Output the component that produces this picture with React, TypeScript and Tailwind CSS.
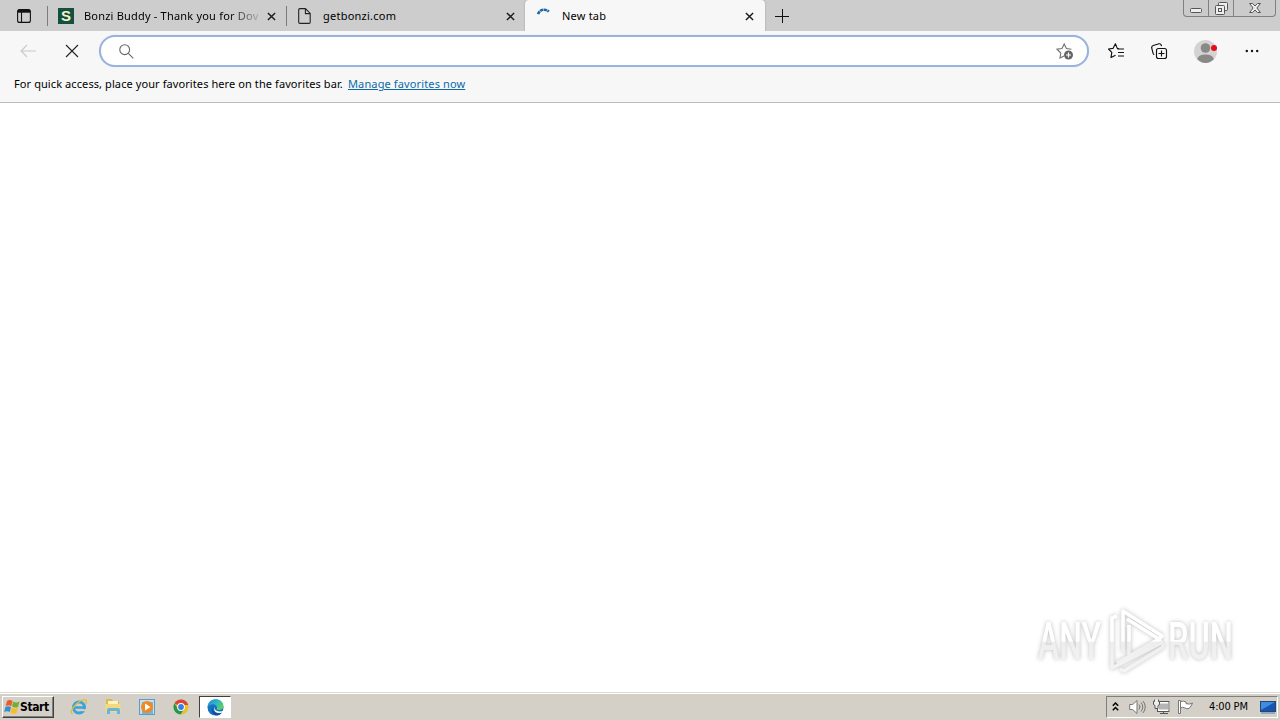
import React from 'react';

interface IconProps {
  className?: string;
}

const CloseIcon: React.FC<IconProps> = ({ className }) => (
  <svg className={className} viewBox="0 0 10 10" fill="none" stroke="#1b1b1b" strokeWidth="1.6">
    <path d="M1 1l8 8M9 1L1 9" />
  </svg>
);

const TabStrip = () => (
  <div className="flex h-[31px] bg-[#cdcdcd] font-['Noto_Sans',sans-serif] text-[11px] text-black">
    <div className="flex w-[47px] items-center pl-[17px]">
      <svg className="h-[14px] w-[14px]" viewBox="0 0 14 14" fill="none" stroke="#111" strokeWidth="1.1">
        <rect x=".6" y=".6" width="12.8" height="12.8" rx="2" />
        <path d="M1 2.2h12" strokeWidth="3" />
        <path d="M4.5 3v10" />
      </svg>
    </div>

    <div className="mt-[6px] h-[20px] w-px bg-[#7c7c7c]" />
    <div className="flex w-[238px] items-center pl-[10px]">
      <div className="flex h-4 w-4 items-center justify-center bg-[#14503f] font-['Liberation_Sans',sans-serif] text-[15px] leading-none font-bold text-[#f6f3c8]">
        S
      </div>
      <div className="mt-px ml-[10px] w-[175px] overflow-hidden whitespace-nowrap [mask-image:linear-gradient(to_right,black_145px,transparent_180px)]">
        <span className="tracking-[0.2px]">Bonzi Buddy - Thank you for Dov</span>
      </div>
      <CloseIcon className="mt-px ml-[8px] h-[9px] w-[9px]" />
    </div>

    <div className="mt-[6px] h-[20px] w-px bg-[#7c7c7c]" />
    <div className="flex w-[238px] items-center pl-[11px]">
      <svg className="h-[16px] w-[13px]" viewBox="0 0 13 16" fill="none" stroke="#222" strokeWidth="1.1">
        <path d="M.7 2Q.7.6 2 .6h5.4l4.8 4.8v8.8q0 1.2-1.2 1.2H2q-1.3 0-1.3-1.2zM7.4.8v4.8H12" />
      </svg>
      <span className="mt-px ml-[12px] w-[183px] tracking-[0.24px]">getbonzi.com</span>
      <CloseIcon className="mt-px h-[9px] w-[9px]" />
    </div>

    <div className="flex w-[240px] items-center rounded-t-[4px] bg-[#f7f7f7] pl-[11px] shadow-[0_0_2px_#999]">
      <svg className="h-[16px] w-[16px]" viewBox="0 0 16 16" fill="none" stroke="#1f67a8" strokeWidth="2.6">
        <path d="M2 6.2A6.5 6.5 0 0 1 12.8 3.600" strokeDasharray="3.300 .5" />
      </svg>
      <span className="mt-px ml-[10px] w-[183px] tracking-[0.2px]">New tab</span>
      <CloseIcon className="mt-px h-[9px] w-[9px]" />
    </div>

    <div className="flex items-center pl-[10px]">
      <svg className="h-[14px] w-[14px]" viewBox="0 0 14 14" stroke="#111">
        <path d="M0 7.5h14M7.5 0v14" />
      </svg>
    </div>

    <div className="mr-[4px] ml-auto flex h-[17px] w-[93px] rounded-b-[4px] border border-t-0 border-[#808080] bg-[#cbcbcb]">
      <div className="flex w-[25px] items-center justify-center border-r border-[#808080]">
        <svg className="mt-[4px] h-[5px] w-[12px]" viewBox="0 0 12 5" fill="#eee" stroke="#555">
          <rect x=".5" y=".5" width="11" height="4" rx="1" />
        </svg>
      </div>
      <div className="flex w-[25px] items-center justify-center border-r border-[#808080]">
        <svg className="h-[13px] w-[13px]" viewBox="0 0 13 13" fill="#eee" stroke="#555">
          <rect x="3.5" y=".5" width="9" height="8" rx="1" />
          <rect x=".5" y="3.5" width="9" height="9" rx="1" />
          <rect x="3.5" y="6.5" width="3" height="3" />
        </svg>
      </div>
      <div className="flex flex-1 items-center justify-center">
        <svg className="h-[10px] w-[12px]" viewBox="0 0 12 10" fill="#eee" stroke="#555" strokeLinejoin="round">
          <path d="M.6.5h3L6 3 8.4.5h3L7.9 5l3.5 4.5h-3L6 7 3.6 9.5h-3L4.1 5z" />
        </svg>
      </div>
    </div>
  </div>
);

const Toolbar = () => (
  <div className="flex h-[40px] items-center bg-[#f7f7f7] pl-[20px]">
    <svg className="h-[14px] w-[16px]" viewBox="0 0 16 14" fill="none" stroke="#c9c9c9" strokeWidth="1.1">
      <path d="M16 7H1M7 1L1 7l6 6" />
    </svg>
    <svg className="ml-[29px] h-[14px] w-[14px]" viewBox="0 0 14 14" stroke="#222" strokeWidth="1.1">
      <path d="M1 1l12 12M13 1L1 13" />
    </svg>
    <div className="ml-[20px] flex h-[32px] w-[990px] items-center rounded-full border-2 border-[#9ab3dc] bg-white pr-[13px] pl-[18px] shadow-[0_0_1px_#bcd6f5]">
      <svg className="h-[15px] w-[15px]" viewBox="0 0 15 15" fill="none" stroke="#666" strokeWidth="1.1">
        <circle cx="5.7" cy="5.7" r="4.9" />
        <path d="M9.3 9.3l5 5" />
      </svg>
      <svg className="ml-auto h-[18px] w-[18px]" viewBox="0 0 18 18" fill="none" stroke="#707070">
        <path d="M8 14l-4 2 .8-5L1 7.2l5-.7L8.2 2l2.2 4.5 5 .7" strokeWidth="1.1" />
        <circle cx="12.5" cy="13" r="4.5" fill="#666" stroke="none" />
        <path d="M12.5 10.5v5M10 13h5" stroke="#fff" strokeWidth="1.2" />
      </svg>
    </div>
    <svg className="ml-[19px] h-[16px] w-[17px]" viewBox="0 0 17 16" fill="none" stroke="#111" strokeWidth="1.15">
      <path d="M11 5.8L9.3 5.4 7.4.8 5 5.4.5 6l3.3 3.4L3 14.6l4.5-2.3" strokeLinejoin="round" />
      <path d="M9.5 6h6.5M10 9.5h6M10 13h6" />
    </svg>
    <svg className="ml-[26px] h-[17px] w-[17px]" viewBox="0 0 17 17" fill="none" stroke="#111" strokeWidth="1.15">
      <path d="M3.2 11.7Q2.2 11.2 2 10L.7 5Q.4 3.2 2.2 2.5L8 .8q1.700-.4 2.200 1.200l.3 1.200" />
      <rect x="5.5" y="5.500" width="10" height="10" rx="2" />
      <path d="M10.500 7.500v6M7.500 10.500h6" />
    </svg>
    <div className="relative ml-[26px] h-[23px] w-[23px]">
      <svg className="h-[23px] w-[23px]" viewBox="0 0 23 23" fill="#8b8987">
        <circle cx="11.5" cy="11.5" r="11.5" fill="#d5d3d1" />
        <circle cx="11.5" cy="8" r="4.8" />
        <path d="M3.2 19.3Q4 14.5 11.5 14.5t8.3 4.8Q16 23 11.5 23t-8.300-3.700z" />
      </svg>
      <div className="absolute top-[5px] left-[17px] h-[6px] w-[6px] rounded-full bg-[#e50b17]" />
    </div>
    <svg className="ml-[28px] h-[4px] w-[14px]" viewBox="0 0 14 4" fill="#111">
      <circle cx="1.8" cy="2" r="1.2" />
      <circle cx="7" cy="2" r="1.2" />
      <circle cx="12.2" cy="2" r="1.2" />
    </svg>
  </div>
);

const FavoritesBar = () => (
  <div className="flex h-[32px] items-center border-b border-[#bcbcbc] bg-[#f7f7f7] pb-[4px] pl-[14px] font-['Noto_Sans',sans-serif] text-[11px] whitespace-nowrap">
    <span className="w-[334px] tracking-[0.09px] text-black">
      For quick access, place your favorites here on the favorites bar.
    </span>
    <a className="tracking-[0.13px] text-[#0b6ba8] underline underline-offset-1">Manage favorites now</a>
  </div>
);

const Watermark = () => (
  <svg
    className="absolute right-[28px] bottom-[14px] h-[74px] w-[220px] drop-shadow-[0_0_2px_rgba(0,0,0,0.26)]"
    viewBox="0 0 220 74"
  >
    <defs>
      <linearGradient id="fade" x1="0" y1="0" x2="0" y2="74" gradientUnits="userSpaceOnUse">
        <stop offset=".5" stopColor="#fff" />
        <stop offset=".52" stopColor="#eee" />
        <stop offset="1" stopColor="#f5f5f5" />
      </linearGradient>
    </defs>
    <g fill="url(#fade)" fontFamily="Roboto, sans-serif" fontSize="51" fontWeight="500">
      <text x="6" y="55" textLength="63" lengthAdjust="spacingAndGlyphs">ANY</text>
      <text x="136" y="55" textLength="65" lengthAdjust="spacingAndGlyphs">RUN</text>
    </g>
    <g fill="none" stroke="url(#fade)" strokeWidth="3.6" strokeLinejoin="round">
      <path d="M91 48V7l39 25-3 3-32-20" />
      <path d="M85 12l-5 2v50l51-26" />
      <path d="M97 21v31l28-16M85 59l44-24M88 65l4 2 39-24v-4" />
    </g>
  </svg>
);

const Taskbar = () => (
  <div className="flex h-[28px] items-center border-t border-[#dedbd5] bg-[#d4d0c8] pl-[2px] shadow-[inset_0_1px_#fff]">
    <div className="mt-px flex h-[22px] w-[52px] items-center border border-t-white border-r-[#404040] border-b-[#404040] border-l-white pl-px shadow-[inset_-1px_-1px_#808080]">
      <svg className="h-[16px] w-[16px] shrink-0" viewBox="0 0 16 16">
        <path d="M3 2q2.500-2 5.500 0L7.300 7Q4.500 5.500 1.700 7z" fill="#ed5b28" />
        <path d="M9.200 2.500q3 2 6.300 0L14 8Q10.500 9.500 8 7.300z" fill="#72ae32" />
        <path d="M1.400 8q2.800-1.500 5.600 0l-1.200 5q-2.800-1.500-5.600 0z" fill="#358ed1" />
        <path d="M7.800 8.500q2.900 1.900 6 .3L12.500 14q-3.300 1.500-6-.3z" fill="#f6bd27" />
      </svg>
      <span className="font-['DejaVu_Sans_Condensed','DejaVu_Sans',sans-serif] text-[12px] font-bold tracking-[-0.4px] text-black">
        Start
      </span>
    </div>

    <svg className="ml-[16px] h-[18px] w-[18px]" viewBox="0 0 18 18" fill="none">
      <circle cx="9" cy="9.500" r="5.500" stroke="#39a4d8" strokeWidth="3" />
      <path d="M5 9.500h10" stroke="#39a4d8" strokeWidth="2.500" />
      <path d="M11 12.200h6" stroke="#d4d0c8" strokeWidth="2" />
      <path d="M2.500 16Q-1 14 5 7.500T15.500 2q2 1 0 4" stroke="#e5b940" strokeWidth="1.400" />
    </svg>
    <svg className="ml-[16px] h-[17px] w-[18px]" viewBox="0 0 18 17">
      <path d="M2 1h6l1 2h6v11H2z" fill="#dfb94e" />
      <path d="M4 3h10v6H4z" fill="#fff5ba" />
      <path d="M1 6h15l1 8H2z" fill="#f2d980" />
      <path d="M3 16v-4q0-2 2-2h9q2 0 2 2v4h-3v-3H6v3z" fill="#69b4dc" />
    </svg>
    <svg className="mt-px ml-[17px] h-[17px] w-[16px]" viewBox="0 0 16 17">
      <rect x=".5" y=".5" width="15" height="15" fill="#c4e1f3" stroke="#5e9cc7" />
      <rect x="3" y="3" width="11" height="12" fill="#73b5e0" />
      <circle cx="8" cy="8" r="6" fill="#f28920" />
      <path d="M6 4.500v7L11.500 8z" fill="#fff" />
    </svg>
    <svg className="ml-[18px] h-[16px] w-[16px]" viewBox="0 0 16 16">
      <circle cx="8" cy="8" r="7.500" fill="#e5c22b" />
      <path d="M8 8L1.500 4.200A7.500 7.500 0 0 1 14.500 4.200z" fill="#db4437" />
      <path d="M1.500 4.200A7.500 7.500 0 0 0 7.500 15.500L11 10 5 10z" fill="#24974f" />
      <path d="M8 4.200h6.500l.7 1.800H10z" fill="#db4437" />
      <circle cx="8" cy="8" r="3.900" fill="#fff" />
      <circle cx="8" cy="8" r="2.900" fill="#397fe2" />
    </svg>
    <div className="mt-px ml-[10px] flex h-[22px] w-[32px] items-center justify-center border border-t-[#404040] border-r-white border-b-white border-l-[#404040] bg-white">
      <svg className="h-[17px] w-[17px]" viewBox="0 0 17 17">
        <defs>
          <linearGradient id="wave" x1="0" y1="0" x2="1" y2=".6">
            <stop offset=".2" stopColor="#2498d8" />
            <stop offset=".6" stopColor="#2fbbbd" />
            <stop offset="1" stopColor="#5fce62" />
          </linearGradient>
        </defs>
        <circle cx="8.500" cy="8.500" r="8" fill="#1672c2" />
        <path d="M8 6.500Q6 9 9 11.500q4 2 8 0V17h-4l2-3.500Q11 15 8 12.500 6 9.500 8 6.500z" fill="#fff" />
        <path d="M.5 8C1-2 16-2.500 16.500 7q0 4-5 4-2.500 0-1.500-2C10.500 5 4 3.500.5 8z" fill="url(#wave)" />
        <path d="M6.800 6.500Q4 11 8 13.500q4 2 7.300 0Q11.500 18 7 15.500 2.500 12 6.800 6.500z" fill="#134f98" />
      </svg>
    </div>

    <div className="mt-px mr-[2px] ml-auto flex h-[22px] w-[172px] items-center border border-t-[#808080] border-r-white border-b-white border-l-[#808080] pl-[5px]">
      <svg className="mb-[2px] h-[9px] w-[7px]" viewBox="0 0 7 9" fill="none" stroke="#000" strokeWidth="1.500">
        <path d="M.8 3.700L3.500 1l2.700 2.700M.8 8.200l2.700-2.700 2.700 2.700" />
      </svg>
      <svg className="ml-[10px] h-[16px] w-[17px]" viewBox="0 0 17 16" fill="none" stroke="#777">
        <path d="M.7 5.500h3L8 1.500v13l-4.300-4h-3z" fill="#fff" />
        <path d="M10 5.500q2 2.500 0 5M12 3.500q3.500 4.500 0 9M14 2q4.500 6 0 12" />
      </svg>
      <svg className="ml-[7px] h-[16px] w-[17px]" viewBox="0 0 17 16" fill="none" stroke="#555">
        <rect x="5" y="3.500" width="11" height="8" fill="#b5b5b5" stroke="#fff" strokeWidth="2" />
        <rect x="4.500" y="2.500" width="11.500" height="10" />
        <path d="M7 14.500h8M10.500 12v3" />
        <path d="M1.500.5v2h-1v3l1.500 1v3h3v-3l1.500-1v-3h-1v-2" fill="#eee" />
      </svg>
      <svg className="ml-[7px] h-[16px] w-[17px]" viewBox="0 0 17 16" fill="#fff" stroke="#777">
        <path d="M3.500 2.500q3-1 5.500.5v1.500q3 1.500 6.500-.5-1 3-3.500 5.500-3 .5-4.500-.7-2-1-4 0z" />
        <path d="M1.500 1.500h2v13h-2z" />
      </svg>
      <span className="mt-px ml-[15px] w-[51px] font-['DejaVu_Sans_Condensed','DejaVu_Sans',sans-serif] text-[11px] tracking-[-0.15px] whitespace-nowrap text-black">
        4:00 PM
      </span>
      <svg className="h-[13px] w-[16px] shrink-0" viewBox="0 0 16 13">
        <rect x=".5" y=".5" width="15" height="10" fill="#1755b0" stroke="#28466d" />
        <path d="M1 1h14L1 9z" fill="#3f8ce0" />
        <path d="M1 12h14" stroke="#7e9abb" strokeWidth="1.500" />
      </svg>
    </div>
  </div>
);

const App: React.FC = () => {
  return (
    <div className="flex h-[720px] w-[1280px] flex-col overflow-hidden bg-white">
      <TabStrip />
      <Toolbar />
      <FavoritesBar />
      <main className="relative flex-1 bg-white">
        <Watermark />
      </main>
      <Taskbar />
    </div>
  );
};

export default App;
